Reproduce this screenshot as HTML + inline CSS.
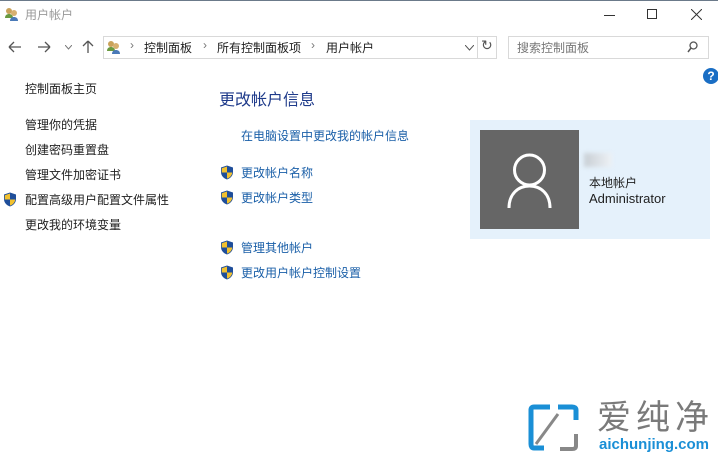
<!DOCTYPE html>
<html><head><meta charset="utf-8"><style>
*{margin:0;padding:0;box-sizing:border-box}
body{width:718px;height:459px;background:#fff;position:relative;overflow:hidden;font-family:"Liberation Sans","Noto Sans CJK SC",sans-serif;font-size:12px;color:#1e1e1e}
.a{position:absolute;white-space:nowrap}
.nav{left:25px;color:#1e1e1e}
.lk{color:#1a5fa8}
.sh{position:absolute;width:14px;height:15px}
</style></head><body>
<div class="a" style="left:0;top:0;width:718px;height:1px;background:#6b7a8a"></div>
<svg class="a" style="left:4px;top:6px" width="16" height="16" viewBox="0 0 16 16"><circle cx="5" cy="5" r="3" fill="#c9a25a"/><path d="M1 12c0-3 2-4 4-4s4 1 4 4z" fill="#6a9a40"/><circle cx="10" cy="7" r="3" fill="#d7b070"/><path d="M6 15c0-3 2-4 4-4s4 1 4 4z" fill="#4a7ab8"/></svg>
<div class="a" style="left:25px;top:6px;color:#999;font-size:12px">用户帐户</div>
<div class="a" style="left:604px;top:15px;width:11px;height:1px;background:#333"></div>
<div class="a" style="left:647px;top:9px;width:10px;height:10px;border:1px solid #333"></div>
<svg class="a" style="left:691px;top:9px" width="11" height="11"><path d="M0 0L11 11M11 0L0 11" stroke="#333" stroke-width="1"/></svg>
<svg class="a" style="left:8px;top:41px" width="14" height="12"><path d="M1 6H13M1 6L6 1M1 6L6 11" stroke="#555" stroke-width="1.3" fill="none"/></svg>
<svg class="a" style="left:37px;top:41px" width="14" height="12"><path d="M1 6H13M13 6L8 1M13 6L8 11" stroke="#555" stroke-width="1.3" fill="none"/></svg>
<svg class="a" style="left:65px;top:45px" width="7" height="5"><path d="M0 0L3.5 4L7 0" stroke="#777" fill="none"/></svg>
<svg class="a" style="left:82px;top:40px" width="12" height="14"><path d="M6 13V1M6 1L1 6M6 1L11 6" stroke="#555" stroke-width="1.3" fill="none"/></svg>
<div class="a" style="left:103px;top:36px;width:394px;height:23px;border:1px solid #d9d9d9"></div>
<div class="a" style="left:477px;top:37px;width:1px;height:21px;background:#d9d9d9"></div>
<svg class="a" style="left:106px;top:39px" width="16" height="16" viewBox="0 0 16 16"><circle cx="5" cy="5" r="3" fill="#c9a25a"/><path d="M1 12c0-3 2-4 4-4s4 1 4 4z" fill="#6a9a40"/><circle cx="10" cy="7" r="3" fill="#d7b070"/><path d="M6 15c0-3 2-4 4-4s4 1 4 4z" fill="#4a7ab8"/></svg>
<div class="a" style="left:130px;top:38px;color:#777">›</div>
<div class="a" style="left:144px;top:39px">控制面板</div>
<div class="a" style="left:203px;top:38px;color:#777">›</div>
<div class="a" style="left:217px;top:39px">所有控制面板项</div>
<div class="a" style="left:311px;top:38px;color:#777">›</div>
<div class="a" style="left:326px;top:39px">用户帐户</div>
<svg class="a" style="left:465px;top:45px" width="9" height="6"><path d="M0 0L4.5 5L9 0" stroke="#555" fill="none"/></svg>
<div class="a" style="left:481px;top:37px;color:#555;font-size:14px">↻</div>
<div class="a" style="left:508px;top:36px;width:201px;height:23px;border:1px solid #d9d9d9"></div>
<div class="a" style="left:517px;top:39px;color:#777">搜索控制面板</div>
<svg class="a" style="left:687px;top:41px" width="11" height="12"><circle cx="6.5" cy="4.5" r="3.5" stroke="#555" fill="none" stroke-width="1.3"/><path d="M4 7L1 11" stroke="#555" stroke-width="1.5"/></svg>
<div class="a" style="left:703px;top:68px;width:16px;height:16px;border-radius:50%;background:#1a6ec4;color:#fff;font-weight:bold;font-size:12px;text-align:center;line-height:16px">?</div>
<div class="a nav" style="top:80px">控制面板主页</div>
<div class="a nav" style="top:116px">管理你的凭据</div>
<div class="a nav" style="top:141px">创建密码重置盘</div>
<div class="a nav" style="top:166px">管理文件加密证书</div>
<div class="a nav" style="top:191px">配置高级用户配置文件属性</div>
<div class="a nav" style="top:216px">更改我的环境变量</div>
<div class="a" style="left:219px;top:86px;font-size:16px;color:#1e3a8a">更改帐户信息</div>
<div class="a lk" style="left:241px;top:127px">在电脑设置中更改我的帐户信息</div>
<div class="a lk" style="left:241px;top:164px">更改帐户名称</div>
<div class="a lk" style="left:241px;top:189px">更改帐户类型</div>
<div class="a lk" style="left:241px;top:239px">管理其他帐户</div>
<div class="a lk" style="left:241px;top:264px">更改用户帐户控制设置</div>
<svg width="0" height="0" style="position:absolute"><defs><g id="s"><path d="M7 0.5L13 2.5V7C13 11 10 13.5 7 14.5C4 13.5 1 11 1 7V2.5Z" fill="#1f4e9a"/><path d="M7 1.5V7.5H1.8V3.2Z M7 7.5H12.2C12 10.5 9.8 12.8 7 13.6Z" fill="#f2c12e"/></g></defs></svg>
<svg class="sh" style="left:3px;top:192px"><use href="#s"/></svg>
<svg class="sh" style="left:220px;top:165px"><use href="#s"/></svg>
<svg class="sh" style="left:220px;top:190px"><use href="#s"/></svg>
<svg class="sh" style="left:220px;top:240px"><use href="#s"/></svg>
<svg class="sh" style="left:220px;top:265px"><use href="#s"/></svg>
<div class="a" style="left:470px;top:120px;width:240px;height:119px;background:#e5f1fb"></div>
<div class="a" style="left:480px;top:130px;width:99px;height:99px;background:#666"></div>
<svg class="a" style="left:480px;top:130px" width="99" height="99"><circle cx="49.5" cy="40" r="15" stroke="#fff" stroke-width="3" fill="none"/><path d="M29 78C29 64 38 56 49.5 56S70 64 70 78" stroke="#fff" stroke-width="3" fill="none"/></svg>
<div class="a" style="left:584px;top:153px;width:28px;height:14px;background:linear-gradient(90deg,#c8ced4,#eef2f6);filter:blur(2px)"></div>
<div class="a" style="left:589px;top:174px">本地帐户</div>
<div class="a" style="left:589px;top:191px;font-size:13px">Administrator</div>
<svg class="a" style="left:528px;top:404px" width="52" height="48"><path d="M22 3H6Q3 3 3 6V40Q3 44 6 44H16" stroke="#1a8fd6" stroke-width="5" fill="none"/><path d="M30 3H44Q48 3 48 6V16" stroke="#1a8fd6" stroke-width="5" fill="none"/><path d="M8 40L30 10" stroke="#888" stroke-width="3"/><path d="M48 30V42Q48 45 44 45H32" stroke="#888" stroke-width="4" fill="none"/></svg>
<div class="a" style="left:597px;top:400px;font-size:34px;color:#7a7a7a;letter-spacing:5px;line-height:36px">爱纯净</div>
<div class="a" style="left:599px;top:436px;font-size:15px;font-weight:bold;color:#1a8fd6">aichunjing.com</div>
</body></html>
